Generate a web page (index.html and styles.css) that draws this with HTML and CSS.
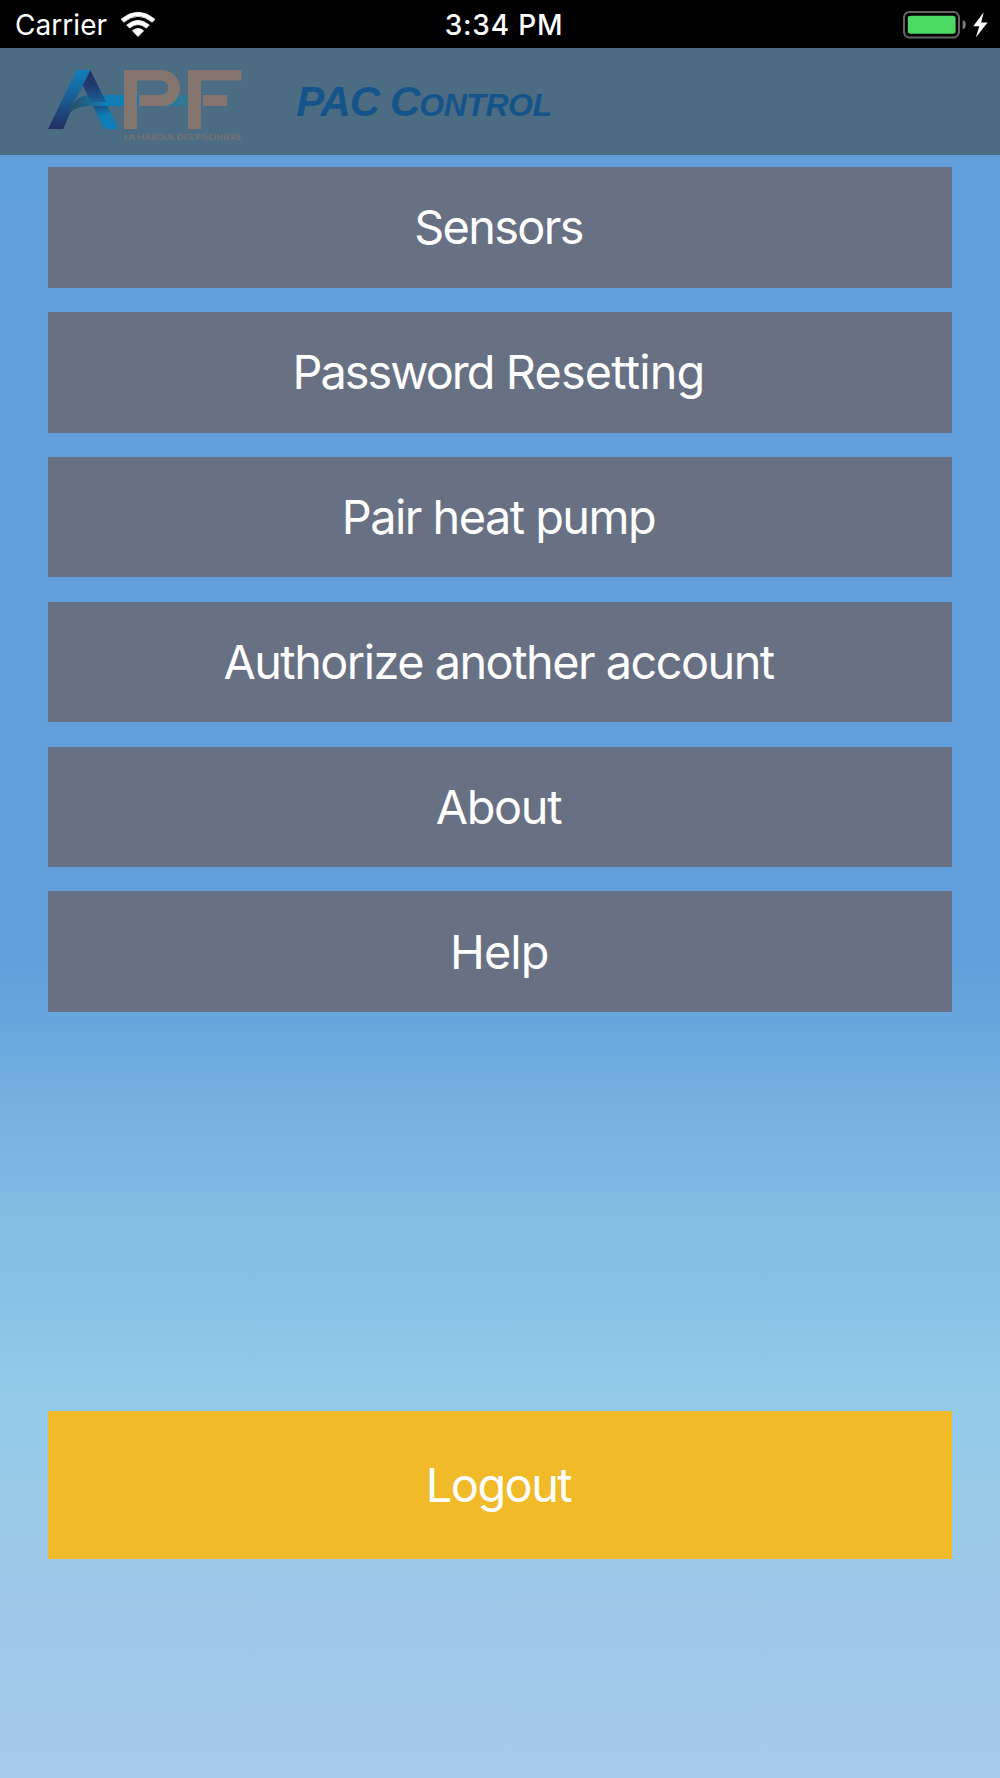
FILE: index.html
```html
<!DOCTYPE html>
<html lang="en">
<head>
<meta charset="utf-8">
<title>PAC Control</title>
<link rel="stylesheet" href="styles.css">
</head>
<body>
<div class="screen">
  <div class="status">
    <div class="status-left">
      <span class="carrier">Carrier</span>
      <svg class="wifi" width="34" height="25" viewBox="0 0 34 25">
        <path d="M0 7.3Q17-7 34 7.3L31.2 10.2Q17-1.6 2.8 10.2Z M5.7 13.1Q17 3.7 28.3 13.1L25.4 16Q17 9.2 8.6 16Z M11.4 18.8Q17 14.2 22.6 18.8L17 24.5Z" fill="#fff" stroke="#fff" stroke-width=".8"/>
      </svg>
    </div>
    <span class="clock">3:34 PM</span>
    <svg class="battery" width="86" height="28" viewBox="0 0 86 28">
      <rect x="1" y="1" width="55" height="25.5" rx="5.5" fill="none" stroke="#656565" stroke-width="2"/>
      <rect x="4.8" y="4.8" width="47.8" height="18" rx="2.8" fill="#4cd964"/>
      <path d="M59.7 9Q62.8 10.2 62.8 13.7T59.7 18.5Z" fill="#7c7c7c"/>
      <path d="M80.7 1.2L70.2 15.2H76.3L72.8 26.5L84.6 11.4H78.2Z" fill="#fff"/>
    </svg>
  </div>
  <header class="header">
    <svg class="logo" width="195" height="76" viewBox="0 0 195 76">
      <defs>
        <linearGradient id="left" x1="0" y1="0" x2="0" y2="1">
          <stop offset="0" stop-color="#117eb9"/><stop offset=".35" stop-color="#17679f"/><stop offset="1" stop-color="#242e61"/>
        </linearGradient>
        <linearGradient id="right" x1="0" y1="0" x2="0" y2="1">
          <stop offset="0" stop-color="#24305f"/><stop offset=".5" stop-color="#203c71"/><stop offset="1" stop-color="#1a5f94"/>
        </linearGradient>
        <linearGradient id="bar" x1="0" y1="0" x2="1" y2="0">
          <stop offset="0" stop-color="#254d62"/><stop offset=".35" stop-color="#1d6890"/><stop offset=".65" stop-color="#107db7"/><stop offset="1" stop-color="#107db7"/>
        </linearGradient>
        <linearGradient id="foot" x1="0" y1="0" x2=".25" y2="1">
          <stop offset="0" stop-color="#184e7b"/><stop offset=".5" stop-color="#107db7"/><stop offset="1" stop-color="#107db7"/>
        </linearGradient>
        <linearGradient id="fade" x1="0" y1="0" x2="1" y2="0">
          <stop offset="0" stop-color="#207ba9"/><stop offset="1" stop-color="#397590"/>
        </linearGradient>
      </defs>
      <path d="M22 44Q24 27 42 26H76V37H42Q29 37 22 44Z" fill="url(#bar)"/>
      <path d="M45 37H59.5L71 60H56Z" fill="url(#foot)"/>
      <path d="M42.3 1L58 33H43L34.5 16Z" fill="url(#right)"/>
      <path d="M0 60L28.7 1H42.3L28.5 29Q24 33 22 44L15.3 60Z" fill="url(#left)"/>
      <path d="M89 26h2v11h-2Z" fill="#107db7"/>
      <path d="M119 26H140V37H119Z" fill="url(#fade)"/>
      <path d="M76 1H113C124 1 132 9 132 19C132 29 125 37 115 37H91V26H112C123 26 123 11.5 112 11.5H89V60H76Z" fill="#84766f"/>
      <path d="M140 1H193.5V11.5H153V60H140ZM155 26h24v11h-24Z" fill="#84766f"/>
      <text class="tagline" x="76" y="71.2" textLength="117" lengthAdjust="spacingAndGlyphs">LA MARQUE DES PISCINIERS</text>
    </svg>
    <h1 class="title">PAC C<span class="small">ONTROL</span></h1>
  </header>
  <main class="content">
    <nav class="menu">
      <a class="item sensors">Sensors</a>
      <a class="item password"><span><span class="tight">Password</span> Resetting</span></a>
      <a class="item pair">Pair heat pump</a>
      <a class="item authorize">Authorize another account</a>
      <a class="item about">About</a>
      <a class="item help">Help</a>
    </nav>
    <a class="item logout">Logout</a>
  </main>
</div>
</body>
</html>
```
FILE: styles.css
```css
* { box-sizing: border-box; }
body { margin: 0; font-family: Inter, "Liberation Sans", sans-serif; }
.screen {
  width: 1000px;
  height: 1778px;
  display: flex;
  flex-direction: column;
  overflow: hidden;
  background: linear-gradient(to bottom, #619fdc 0, #619edb 940px, #69a6dc 1030px, #77b3e0 1115px, #7eb9e3 1185px, #81bfe2 1220px, #85c2e6 1290px, #92caea 1390px, #9acae8 1500px, #a0c8ea 1620px, #a5c9eb 1778px);
}
.status {
  height: 48.3px;
  flex: none;
  padding: 0 11px 0 15px;
  display: grid;
  grid-template-columns: 1fr auto 1fr;
  align-items: center;
  background: #000;
  color: #fff;
}
.status-left { display: flex; align-items: center; gap: 14px; }
.carrier { font-size: 28px; line-height: 48px; letter-spacing: 0.05px; padding-top: 1px; }
.wifi { margin-top: 0; }
.clock { font-size: 28px; line-height: 48px; font-weight: 500; padding: 1px 0 0 4px; letter-spacing: 0.8px; }
.battery { justify-self: end; }
.header {
  height: 106.3px;
  flex: none;
  display: flex;
  padding: 20.7px 48.3px 0;
  background: #4b6c82;
}
.logo { flex: none; }
.tagline { font: 700 8px Lato, sans-serif; fill: #7a7271; }
.title {
  margin: 8px 0 0 53px;
  font: italic bold 42px/50px "Liberation Sans", Arial, sans-serif;
  letter-spacing: -0.9px;
  color: #15548a;
  white-space: nowrap;
}
.small { font-size: 32px; letter-spacing: -0.5px; }
.content {
  flex: 1;
  display: flex;
  flex-direction: column;
  padding: 12.3px 48.3px 0;
}
.menu { display: flex; flex-direction: column; gap: 24.15px; }
.item {
  height: 120.77px;
  display: flex;
  align-items: center;
  justify-content: center;
  padding: 0.4px 3px 0 0;
  background: #687083;
  color: #fff;
  font-size: 46.8px;
  letter-spacing: -1.5px;
  white-space: nowrap;
}
.sensors { letter-spacing: -1.65px; }
.password { letter-spacing: -0.8px; }
.tight { letter-spacing: -1.95px; }
.about { letter-spacing: -1.3px; }
.help { letter-spacing: -0.9px; padding-right: 1.5px; }
.logout { height: 148px; margin-top: 398.5px; background: #f0ba29; }
```
